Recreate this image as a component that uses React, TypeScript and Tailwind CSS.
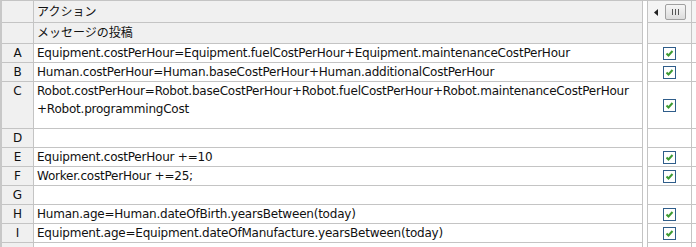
import React from "react";

const rows: { k: string; t: string[]; h: string; c: boolean }[] = [
  { k: "A", t: ["Equipment.costPerHour=Equipment.fuelCostPerHour+Equipment.maintenanceCostPerHour"], h: "h-[19px]", c: true },
  { k: "B", t: ["Human.costPerHour=Human.baseCostPerHour+Human.additionalCostPerHour"], h: "h-[19px]", c: true },
  { k: "C", t: ["Robot.costPerHour=Robot.baseCostPerHour+Robot.fuelCostPerHour+Robot.maintenanceCostPerHour", "+Robot.programmingCost"], h: "h-[47px]", c: true },
  { k: "D", t: [], h: "h-[19px]", c: false },
  { k: "E", t: ["Equipment.costPerHour +=10"], h: "h-[19px]", c: true },
  { k: "F", t: ["Worker.costPerHour +=25;"], h: "h-[19px]", c: true },
  { k: "G", t: [], h: "h-[19px]", c: false },
  { k: "H", t: ["Human.age=Human.dateOfBirth.yearsBetween(today)"], h: "h-[19px]", c: true },
  { k: "I", t: ["Equipment.age=Equipment.dateOfManufacture.yearsBetween(today)"], h: "h-[19px]", c: true },
];

function Check() {
  return (
    <svg width="13" height="13" viewBox="0 0 13 13">
      <rect x="0.5" y="0.5" width="12" height="12" fill="#fff" stroke="#2f5d8a" />
      <path d="M3.5 6.5 L5.5 8.5 L9.5 4" stroke="#3c9a32" strokeWidth="2" fill="none" />
    </svg>
  );
}

export default function App() {
  const font = { fontFamily: '"DejaVu Sans", "Noto Sans CJK JP", sans-serif' };
  return (
    <div className="w-[696px] h-[247px] overflow-hidden bg-white text-[12px] text-[#111]" style={font}>
      <div className="border-t border-[#c4c4c4] border-l-2 border-l-[#c8c8c8]">
        {/* header row */}
        <div className="flex h-[22px]">
          <div className="w-[32px] bg-[#f0f0f0] border-r border-b border-[#c4c4c4]" />
          <div className="w-[609px] bg-[#f0f0f0] border-r border-b border-[#c4c4c4] pl-[3px] flex items-center">アクション</div>
          <div className="w-[4px] bg-white" />
          <div className="w-[45px] bg-[#f4f4f4] border-l border-r border-b border-[#c4c4c4] flex items-center relative">
            <svg width="4" height="7" viewBox="0 0 4 7" className="absolute left-[6px] top-[8px]">
              <path d="M4 0 L0 3.5 L4 7 Z" fill="#222" />
            </svg>
            <div className="absolute left-[17px] top-[3px] w-[21px] h-[16px] border border-[#a0a0a0] rounded-[2px] bg-gradient-to-b from-[#f6f6f6] to-[#dcdcdc] flex items-center justify-center gap-[1px]">
              <div className="w-[1px] h-[6px] bg-[#555]" />
              <div className="w-[1px] h-[6px] bg-[#555] ml-[1px]" />
              <div className="w-[1px] h-[6px] bg-[#555] ml-[1px]" />
            </div>
          </div>
          <div className="flex-1 bg-[#f4f4f4] border-b border-[#c4c4c4]" />
        </div>
        {/* second header */}
        <div className="flex h-[21px]">
          <div className="w-[32px] bg-[#f0f0f0] border-r border-b border-[#c4c4c4]" />
          <div className="w-[609px] bg-[#f0f0f0] border-r border-b border-[#c4c4c4] pl-[3px] flex items-center">メッセージの投稿</div>
          <div className="w-[4px] bg-white" />
          <div className="w-[45px] bg-[#f4f4f4] border-l border-r border-b border-[#c4c4c4]" />
          <div className="flex-1 bg-[#f4f4f4] border-b border-[#c4c4c4]" />
        </div>
        {rows.map((r) => (
          <div key={r.k} className={`flex ${r.h}`}>
            <div className="w-[32px] bg-[#f0f0f0] border-r border-b border-[#c4c4c4] flex justify-center pt-[1px] leading-[17px]">{r.k}</div>
            <div className="w-[609px] border-r border-b border-[#c4c4c4] pl-[3px] pt-[1px] leading-[17px] tracking-[-0.22px] whitespace-nowrap overflow-hidden">
              {r.t.map((l, i) => (
                <div key={i} className={i > 0 ? "mt-[1px]" : ""}>{l}</div>
              ))}
            </div>
            <div className="w-[4px] bg-white" />
            <div className="w-[45px] border-l border-r border-b border-[#c4c4c4] flex items-center justify-center">
              {r.c && <Check />}
            </div>
            <div className="flex-1 border-b border-[#c4c4c4]" />
          </div>
        ))}
        <div className="flex h-[10px]">
          <div className="w-[32px] bg-[#f0f0f0] border-r border-[#c4c4c4]" />
          <div className="w-[609px] border-r border-[#c4c4c4]" />
          <div className="w-[4px] bg-white" />
          <div className="w-[45px] border-l border-r border-[#c4c4c4]" />
          <div className="flex-1" />
        </div>
      </div>
    </div>
  );
}
